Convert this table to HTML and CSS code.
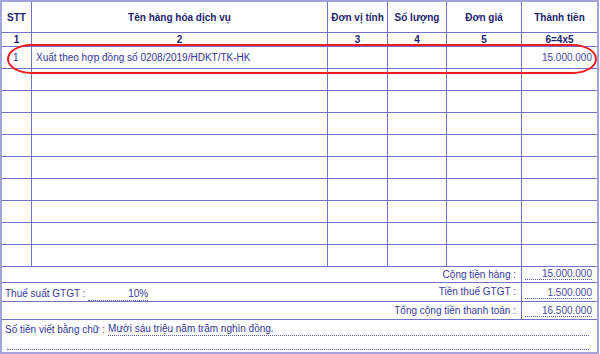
FILE: index.html
```html
<!DOCTYPE html>
<html lang="vi">
<head>
<meta charset="utf-8">
<title>Hóa đơn</title>
<link rel="stylesheet" href="styles.css">
</head>
<body>
<div class="wrap">
  <table class="inv">
    <colgroup>
      <col class="c1"><col class="c2"><col class="c3"><col class="c4"><col class="c5"><col class="c6">
    </colgroup>
    <thead>
      <tr class="hd"><th>STT</th><th>Tên hàng hóa dịch vụ</th><th>Đơn vị tính</th><th>Số lượng</th><th>Đơn giá</th><th>Thành tiền</th></tr>
      <tr class="num"><th>1</th><th>2</th><th>3</th><th>4</th><th>5</th><th>6=4x5</th></tr>
    </thead>
    <tbody>
      <tr class="row"><td class="stt">1</td><td class="name">Xuất theo hợp đồng số 0208/2019/HDKT/TK-HK</td><td></td><td></td><td></td><td class="amt">15.000.000</td></tr>
      <tr class="row"><td></td><td></td><td></td><td></td><td></td><td></td></tr>
      <tr class="row"><td></td><td></td><td></td><td></td><td></td><td></td></tr>
      <tr class="row"><td></td><td></td><td></td><td></td><td></td><td></td></tr>
      <tr class="row"><td></td><td></td><td></td><td></td><td></td><td></td></tr>
      <tr class="row"><td></td><td></td><td></td><td></td><td></td><td></td></tr>
      <tr class="row"><td></td><td></td><td></td><td></td><td></td><td></td></tr>
      <tr class="row"><td></td><td></td><td></td><td></td><td></td><td></td></tr>
      <tr class="row"><td></td><td></td><td></td><td></td><td></td><td></td></tr>
      <tr class="row"><td></td><td></td><td></td><td></td><td></td><td></td></tr>
      <tr class="sum s1"><td colspan="5" class="lbl">Cộng tiền hàng :</td><td class="val"><span class="dots">15.000.000</span></td></tr>
      <tr class="sum s2"><td colspan="5" class="lbl"><div class="split"><span class="left">Thuế suất GTGT : <span class="rate">10%</span></span><span>Tiền thuế GTGT :</span></div></td><td class="val"><span class="dots">1.500.000</span></td></tr>
      <tr class="sum s3"><td colspan="5" class="lbl">Tổng cộng tiền thanh toán :</td><td class="val"><span class="dots">16.500.000</span></td></tr>
      <tr class="words"><td colspan="6"><div class="wline"><span class="wlbl">Số tiền viết bằng chữ :</span><span class="wval">Mười sáu triệu năm trăm nghìn đồng.</span></div><div class="wline2"></div></td></tr>
    </tbody>
  </table>
  <div class="ring"></div>
</div>
</body>
</html>
```

FILE: styles.css
```css
html, body {
  margin: 0;
  padding: 0;
  background: #ffffff;
}
body {
  font-family: "Liberation Sans", Arial, sans-serif;
  font-size: 10px;
  color: #35359a;
}
.wrap {
  position: relative;
  width: 600px;
  height: 354px;
}
.inv {
  table-layout: fixed;
  border-collapse: separate;
  border-spacing: 0;
  width: 599px;
  border: 2px solid #a4a4da;
}
.c1 { width: 30px; }
.c2 { width: 296px; }
.c3 { width: 60px; }
.c4 { width: 59px; }
.c5 { width: 75px; }
.c6 { width: 75px; }

.inv th, .inv td {
  box-sizing: border-box;
  padding: 0;
  border-right: 1px solid #7272c6;
  border-bottom: 1px solid #7272c6;
  vertical-align: middle;
  overflow: hidden;
  white-space: nowrap;
}
.inv tr > :last-child { border-right: none; }
.inv tr.words td { border-bottom: none; }

.inv th {
  font-weight: bold;
  color: #1e1e6e;
  text-align: center;
}
.hd th { height: 31px; }
.num th { height: 14px; line-height: 12px; }
.row td { height: 22px; }
.stt { padding-left: 11px !important; }
.name { padding-left: 4px !important; }
.amt { text-align: right; padding-right: 5px !important; color: #4a4aa0; }

.sum.s1 td { height: 16px; }
.sum.s2 td { height: 18px; }
.sum.s3 td { height: 18px; }
.lbl {
  text-align: right;
  padding-right: 5px !important;
  color: #3a3a9c;
}
.sum .lbl { vertical-align: top; padding-top: 2px !important; }
.s2 .lbl, .s3 .lbl { padding-top: 3px !important; }
.split {
  display: flex;
  justify-content: space-between;
  align-items: flex-start;
}
.left {
  padding-left: 3px;
  padding-top: 2px;
}
.rate {
  display: inline-block;
  width: 60px;
  box-sizing: border-box;
  padding-left: 21px;
  border-bottom: 1px dotted #5a5aaa;
  line-height: 12px;
}
.val {
  vertical-align: bottom !important;
  padding: 0 5px 2px 3px !important;
  color: #4a4aa0;
}
.dots {
  display: block;
  text-align: right;
  border-bottom: 1px dotted #5a5aaa;
  line-height: 11px;
}
.words td {
  height: 32px;
  vertical-align: top;
  padding: 3px 8px 0 3px !important;
}
.wline {
  display: flex;
  align-items: flex-end;
}
.wlbl {
  padding-right: 3px;
  line-height: 12px;
}
.wval {
  flex: 1;
  line-height: 12px;
  border-bottom: 1px dotted #5a5aaa;
}
.wline2 {
  margin-top: 13px;
  margin-left: 2px;
  border-bottom: 1px dotted #5a5aaa;
}
.ring {
  position: absolute;
  left: 7px;
  top: 44px;
  width: 590px;
  height: 30px;
  box-sizing: border-box;
  border: 2px solid #ee1c1c;
  border-radius: 24px / 15px;
  pointer-events: none;
}
```
